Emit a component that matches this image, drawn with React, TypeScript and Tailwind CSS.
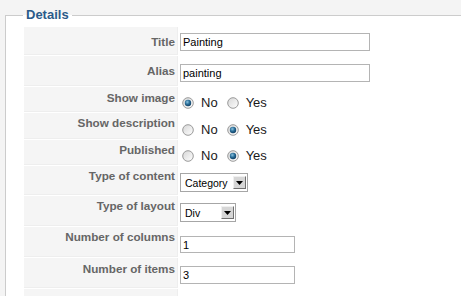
import React from "react";

const Radio = ({ checked }: { checked: boolean }) => (
  <svg width="12" height="12" viewBox="0 0 12 12" className="shrink-0">
    <defs>
      <linearGradient id="rbg" x1="0" y1="0" x2="1" y2="1">
        <stop offset="0" stopColor="#d6d6d6" />
        <stop offset="1" stopColor="#ffffff" />
      </linearGradient>
      <radialGradient id="rdot" cx="0.4" cy="0.35" r="0.7">
        <stop offset="0" stopColor="#8cc3e0" />
        <stop offset="0.5" stopColor="#2a6e98" />
        <stop offset="1" stopColor="#0e3a5e" />
      </radialGradient>
    </defs>
    <circle cx="6" cy="6" r="5.3" fill="url(#rbg)" stroke="#9a9a9a" strokeWidth="1" />
    {checked && <circle cx="6" cy="6" r="3.2" fill="url(#rdot)" />}
  </svg>
);

const RadioPair = ({ yes }: { yes: boolean }) => (
  <div className="flex items-baseline text-[13px] leading-[15px] text-[#1a1a1a]">
    <span className="ml-[2px] mr-[7px] self-end mb-[1px]">
      <Radio checked={!yes} />
    </span>
    <span>No</span>
    <span className="ml-[9px] mr-[7px] self-end mb-[1px]">
      <Radio checked={yes} />
    </span>
    <span>Yes</span>
  </div>
);

const TextBox = ({ value, w, h }: { value: string; w: string; h: string }) => (
  <div className={`${w} ${h} border border-[#b4b4b4] bg-white pl-[2px] text-[11px] leading-[16px] text-black`}>
    {value}
  </div>
);

const SelectBox = ({ value, w }: { value: string; w: string }) => (
  <div className={`${w} flex h-[19px] items-stretch border border-[#a6a6a6] bg-white`}>
    <span className="flex-1 whitespace-nowrap pl-[4px] pt-[1px] text-[10.5px] leading-[16px] text-black">{value}</span>
    <span className="my-[2px] mr-[1px] flex w-[13px] shrink-0 items-center justify-center border border-t-[#f0f0f0] border-l-[#f0f0f0] border-r-[#707070] border-b-[#707070] bg-[#d6d6d6]">
      <svg width="7" height="4" viewBox="0 0 7 4">
        <path d="M0 0 L7 0 L3.5 4 Z" fill="#000" />
      </svg>
    </span>
  </div>
);

type Row = {
  label: string;
  h: string;
  lpt: string;
  vpt: string;
  content: React.ReactNode;
};

const rows: Row[] = [
  { label: "Title", h: "h-[29px]", lpt: "pt-[8px]", vpt: "pt-[6px]", content: <TextBox value="Painting" w="w-[190px]" h="h-[18px]" /> },
  { label: "Alias", h: "h-[31px]", lpt: "pt-[8px]", vpt: "pt-[8px]", content: <TextBox value="painting" w="w-[190px]" h="h-[18px]" /> },
  { label: "Show image", h: "h-[26px]", lpt: "pt-[4px]", vpt: "pt-[8px]", content: <RadioPair yes={false} /> },
  { label: "Show description", h: "h-[27px]", lpt: "pt-[3px]", vpt: "pt-[9px]", content: <RadioPair yes={true} /> },
  { label: "Published", h: "h-[26px]", lpt: "pt-[3px]", vpt: "pt-[8px]", content: <RadioPair yes={true} /> },
  { label: "Type of content", h: "h-[30px]", lpt: "pt-[3px]", vpt: "pt-[7px]", content: <SelectBox value="Category" w="w-[68px]" /> },
  { label: "Type of layout", h: "h-[31px]", lpt: "pt-[3px]", vpt: "pt-[7px]", content: <SelectBox value="Div" w="w-[56px]" /> },
  { label: "Number of columns", h: "h-[31px]", lpt: "pt-[3px]", vpt: "pt-[9px]", content: <TextBox value="1" w="w-[115px]" h="h-[17px]" /> },
  { label: "Number of items", h: "h-[31px]", lpt: "pt-[4px]", vpt: "pt-[8px]", content: <TextBox value="3" w="w-[115px]" h="h-[18px]" /> },
  { label: "", h: "h-[31px]", lpt: "pt-[3px]", vpt: "pt-[8px]", content: null },
];

export default function App() {
  return (
    <div className="h-[296px] w-[461px] overflow-hidden bg-[#f4f4f4] pl-[5px] pt-[7px] font-['Liberation_Sans',Arial,sans-serif]">
      <fieldset className="w-[520px] border border-[#cccccc] bg-white px-[17px] pb-[10px] pt-[4px]">
        <legend className="px-[3px] text-[13px] font-bold leading-[16px] text-[#2a5b8a]">Details</legend>
        <div className="ml-[1px] flex flex-col">
          {rows.map((r, i) => (
            <div key={i} className={`flex ${r.h}`}>
              <div
                className={`mb-px w-[154px] shrink-0 border-b border-r border-[#eeeeee] bg-[#f5f5f5] pr-[2px] text-right text-[11.7px] font-bold leading-[14px] text-[#666666] ${r.lpt}`}
              >
                {r.label}
              </div>
              <div className={`pl-[2px] ${r.vpt}`}>{r.content}</div>
            </div>
          ))}
        </div>
      </fieldset>
    </div>
  );
}
